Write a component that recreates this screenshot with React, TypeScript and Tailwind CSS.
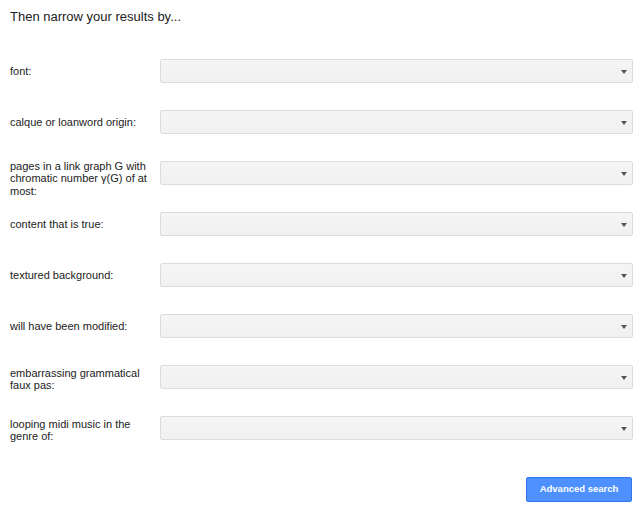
import React from "react";

const rows: { label: string[]; pad: string }[] = [
  { label: ["font:"], pad: "pt-[5.5px]" },
  { label: ["calque or loanword origin:"], pad: "pt-[5.5px]" },
  { label: ["pages in a link graph G with", "chromatic number γ(G) of at", "most:"], pad: "-mt-[1.5px]" },
  { label: ["content that is true:"], pad: "pt-[5.5px]" },
  { label: ["textured background:"], pad: "pt-[5.5px]" },
  { label: ["will have been modified:"], pad: "pt-[5.5px]" },
  { label: ["embarrassing grammatical", "faux pas:"], pad: "pt-[1.5px]" },
  { label: ["looping midi music in the", "genre of:"], pad: "pt-[1.5px]" },
];

function SelectBox() {
  return (
    <div className="h-[24px] w-full rounded-[2px] border border-[#dcdcdc] bg-gradient-to-b from-[#f5f5f5] to-[#f1f1f1] flex items-center justify-end pr-[5px]">
      <div className="w-0 h-0 border-l-[3.5px] border-r-[3.5px] border-t-[4px] border-l-transparent border-r-transparent border-t-[#555555] mt-[1px]" />
    </div>
  );
}

export default function App() {
  return (
    <div
      className="w-[640px] h-[510px] bg-white text-[#222222] pl-[10px] pr-[7px] pt-[9px]"
      style={{ fontFamily: '"Liberation Sans", Arial, sans-serif' }}
    >
      <div className="text-[13px] leading-[15px]">Then narrow your results by...</div>
      <div className="mt-[35px] flex flex-col gap-[27px]">
        {rows.map((r, i) => (
          <div key={i} className="grid grid-cols-[150px_1fr] h-[24px] items-start">
            <div className={`text-[11px] leading-[12.5px] ${r.pad}`}>
              {r.label.map((l, j) => (
                <div key={j}>{l}</div>
              ))}
            </div>
            <SelectBox />
          </div>
        ))}
      </div>
      <div className="mt-[37px] flex justify-end pr-[1px]">
        <button className="h-[25px] w-[106px] rounded-[2px] border border-[#3079ed] bg-[#4d90fe] text-white font-bold text-[9.5px] flex items-center justify-center">
          Advanced search
        </button>
      </div>
    </div>
  );
}
